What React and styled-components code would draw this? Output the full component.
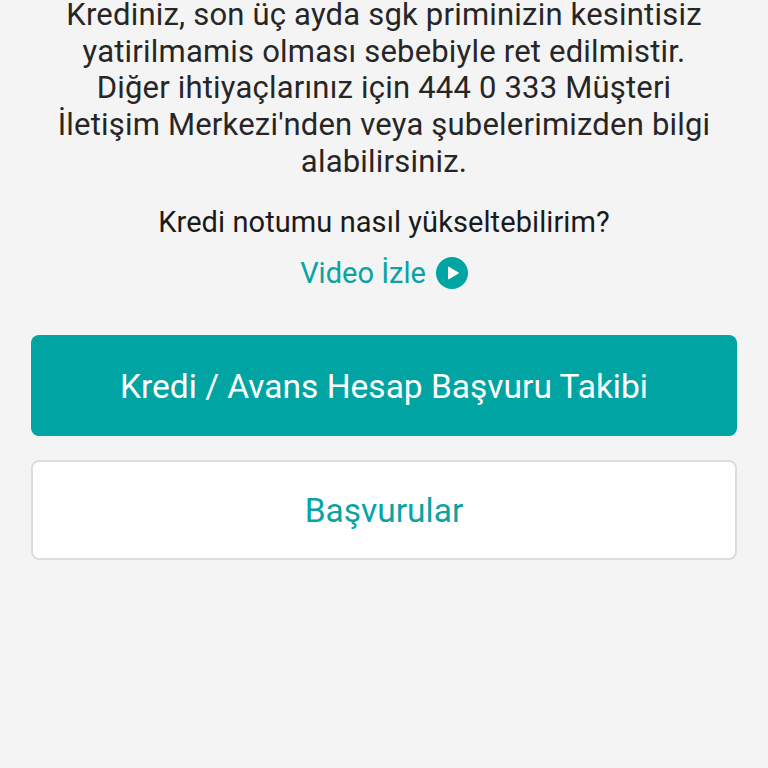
import styled, { createGlobalStyle } from "styled-components";

const Global = createGlobalStyle`
	html, body {
		margin: 0;
		padding: 0;
		background: #f4f4f4;
	}
`;

const Page = styled.div`
	width: 768px;
	height: 768px;
	overflow: hidden;
	box-sizing: border-box;
	padding: 1px 31px 0;
	display: flex;
	flex-direction: column;
	align-items: stretch;
	background: #f4f4f4;
	font-family: Roboto, "Liberation Sans", sans-serif;
`;

const Message = styled.div`
	margin: 0 -20px;
	display: flex;
	flex-direction: column;
	gap: 8.7px;
	text-align: center;
	font-size: 31px;
	letter-spacing: 0.2px;
	color: #262626;
`;

const MessageLine = styled.span`
	display: block;
	line-height: 28px;
	white-space: nowrap;
`;

const Question = styled.div`
	margin-top: 28px;
	text-align: center;
	font-size: 29px;
	letter-spacing: 0.08px;
	line-height: 36px;
	color: #1a1a1a;
`;

const VideoLink = styled.a`
	margin-top: 15px;
	display: flex;
	justify-content: center;
	align-items: center;
	gap: 10px;
	font-size: 29px;
	line-height: 36px;
	color: #08a3a3;
`;

const Button = styled.div`
	box-sizing: border-box;
	height: ${(p) => (p.$primary ? "101px" : "100px")};
	padding-top: ${(p) => (p.$primary ? "3px" : "1px")};
	display: flex;
	align-items: center;
	justify-content: center;
	border-radius: 8px;
	font-size: 33.5px;
	background: ${(p) => (p.$primary ? "#00a4a3" : "#fff")};
	color: ${(p) => (p.$primary ? "#fff" : "#08a3a3")};
	border: ${(p) => (p.$primary ? "none" : "2px solid #dcdcdc")};
`;

const Buttons = styled.div`
	margin-top: 44px;
	display: flex;
	flex-direction: column;
	gap: 24px;
`;

const PlayIcon = () => (
	<svg width="32" height="32" viewBox="0 0 32 32">
		<circle cx="16" cy="16" r="16" fill="#00a4a3" />
		<path d="M12.5 10 L22.5 16 L12.5 22 Z" fill="#fff" stroke="#fff" strokeWidth="1" strokeLinejoin="round" />
	</svg>
);

const lines = [
	"Krediniz, son üç ayda sgk priminizin kesintisiz",
	"yatirilmamis olması sebebiyle ret edilmistir.",
	"Diğer ihtiyaçlarınız için 444 0 333 Müşteri",
	"İletişim Merkezi'nden veya şubelerimizden bilgi",
	"alabilirsiniz.",
];

const App = () => {
	return (
		<Page>
			<Global />
			<Message>
				{lines.map((line) => (
					<MessageLine key={line}>{line}</MessageLine>
				))}
			</Message>
			<Question>Kredi notumu nasıl yükseltebilirim?</Question>
			<VideoLink>
				Video İzle
				<PlayIcon />
			</VideoLink>
			<Buttons>
				<Button $primary>Kredi / Avans Hesap Başvuru Takibi</Button>
				<Button>Başvurular</Button>
			</Buttons>
		</Page>
	);
};

export default App;
